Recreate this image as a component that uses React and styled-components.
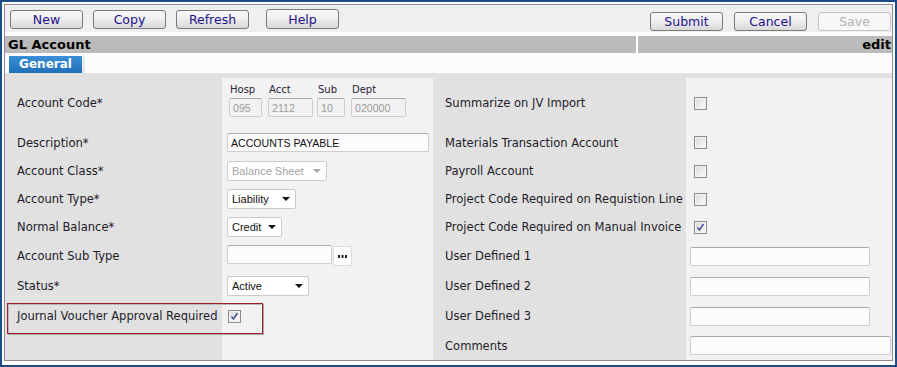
import React from "react";
import styled, { createGlobalStyle } from "styled-components";

const GlobalStyle = createGlobalStyle`
  html, body {
    margin: 0;
    padding: 0;
    background: #ffffff;
  }
  body {
    font-family: "DejaVu Sans", Verdana, sans-serif;
  }
`;

const Frame = styled.div`
  width: 897px;
  height: 367px;
  box-sizing: border-box;
  border: 2px solid #1a4c88;
  padding: 2px 2px 4px 2px;
  background: #fdfdfd;
`;

const Panel = styled.div`
  height: 100%;
  box-sizing: border-box;
  border: 1px solid #8c8c8c;
  display: flex;
  flex-direction: column;
  background: #ffffff;
`;

const Toolbar = styled.div`
  height: 27px;
  flex: none;
  display: flex;
  justify-content: space-between;
  background: #efefef;
  padding: 0 1px 0 5px;
  margin-bottom: 4px;
`;

const ButtonGroup = styled.div`
  display: flex;
  align-items: flex-start;
  gap: ${p => p.$gap}px;
  padding-top: ${p => p.$top}px;
`;

const Button = styled.button`
  width: 73px;
  height: ${p => (p.$raise ? 20 : 19)}px;
  margin-top: ${p => (p.$raise ? -1 : 0)}px;
  margin-left: ${p => p.$push || 0}px;
  box-sizing: border-box;
  padding: 0;
  border: 1px solid ${p => (p.disabled ? "#c6c6c6" : "#7a7a7a")};
  border-radius: 3px;
  background: ${p =>
    p.disabled
      ? "#f7f7f7"
      : "linear-gradient(#f8f8f8 0%, #efefef 45%, #d8d8d8 100%)"};
  color: ${p => (p.disabled ? "#b2b2b2" : "#1f118c")};
  font: 12.5px "DejaVu Sans", Verdana, sans-serif;
  line-height: 17px;
`;

const HeaderBar = styled.div`
  height: 17px;
  flex: none;
  display: grid;
  grid-template-columns: 631px 1fr;
  gap: 2px;
`;

const HeaderCell = styled.div`
  background: #bbbbbb;
  font: bold 13px "DejaVu Sans", Verdana, sans-serif;
  line-height: 17px;
  color: #000;
  text-align: ${p => p.$align || "left"};
  padding: 0 1px 0 3px;
`;

const TabRow = styled.div`
  height: 20px;
  flex: none;
  background: #fcfcfc;
  padding: 3px 0 0 4px;
  box-sizing: border-box;
  display: flex;
`;

const Tab = styled.div`
  width: 73px;
  height: 17px;
  background: linear-gradient(#3b8fd6, #1f6fba);
  color: #ffffff;
  font: bold 12px "DejaVu Sans", Verdana, sans-serif;
  line-height: 17px;
  text-align: center;
  border-right: 3px solid #ececec;
`;

const FormGrid = styled.div`
  flex: 1;
  display: grid;
  grid-template-columns: 217px 211px 253px 1fr;
  grid-template-rows: 50px 29px 28px 28px 28px 30px 30px 30px 1fr;
  background: #e1e1e1;
  padding-top: 5px;
`;

const Label = styled.div`
  position: relative;
  display: flex;
  align-items: center;
  padding-left: 12px;
  font-size: 11.55px;
  color: #1f1c2a;
  white-space: nowrap;
`;

const Value = styled.div`
  display: flex;
  align-items: ${p => p.$align || "center"};
  background: #f2f2f2;
  padding-left: ${p => p.$pad ?? 5}px;
`;

const Highlight = styled.div`
  position: absolute;
  left: 2px;
  top: 2px;
  width: 256px;
  height: 31px;
  box-sizing: border-box;
  border: 1px solid #9e1b2b;
  box-shadow: 1px 1px 0 #a8a8a8, inset 1px 1px 0 #b8b8b8;
  pointer-events: none;
`;

const CodeGroup = styled.div`
  display: flex;
  padding-top: 6px;
  margin-left: 2px;
`;

const CodePart = styled.div`
  display: flex;
  flex-direction: column;
  margin-left: ${p => p.$gap || 0}px;
`;

const SubLabel = styled.span`
  font-size: 10px;
  line-height: 12px;
  color: #2b2438;
  padding-left: 1px;
  margin-bottom: 2px;
`;

const Field = styled.input`
  width: ${p => p.$w}px;
  height: ${p => p.$h || 19}px;
  box-sizing: border-box;
  margin: 0;
  padding: 0 3px;
  border: 1px solid #cfcfcf;
  border-top-color: #a9a9a9;
  border-radius: 2px;
  background: ${p => (p.disabled ? "#f2f2f2" : "#fcfcfc")};
  color: ${p => (p.disabled ? "#9c9c9c" : "#111")};
  font: 10.6px "Liberation Sans", Arial, sans-serif;
  outline: none;
`;

const SelectBox = styled.div`
  width: ${p => p.$w}px;
  height: 20px;
  box-sizing: border-box;
  display: flex;
  align-items: center;
  justify-content: space-between;
  padding: 0 5px 0 4px;
  border: 1px solid #cccccc;
  border-radius: 2px;
  background: #ffffff;
  color: ${p => (p.$disabled ? "#a3a3a3" : "#111")};
  font: 11px "Liberation Sans", Arial, sans-serif;
`;

const Arrow = styled.span`
  width: 0;
  height: 0;
  border-left: 4px solid transparent;
  border-right: 4px solid transparent;
  border-top: 4px solid ${p => (p.$disabled ? "#a8a8a8" : "#111")};
`;

const LookupRow = styled.div`
  display: flex;
  padding-top: 4px;
`;

const LookupButton = styled.div`
  width: 19px;
  height: 20px;
  margin-left: 1px;
  margin-top: 1px;
  box-sizing: border-box;
  border: 1px solid #dcdcdc;
  background: #ffffff;
  display: flex;
  align-items: center;
  justify-content: center;
`;

const Box = styled.span`
  width: 13px;
  height: 13px;
  box-sizing: border-box;
  border: 1px solid #8a8b8b;
  box-shadow: inset 0 0 0 1px #f3f3f3;
  background: linear-gradient(135deg, #d9d9d9, #fbfbfb);
  display: flex;
  align-items: center;
  justify-content: center;
`;

const Checkbox = ({ checked }) => (
  <Box>
    {checked && (
      <svg width="9" height="9" viewBox="0 0 9 9">
        <path d="M1.5 4.5 L3.5 7 L7.5 1" fill="none" stroke="#4a5a9c" strokeWidth="1.6" />
      </svg>
    )}
  </Box>
);

const Select = ({ w, children, disabled }) => (
  <SelectBox $w={w} $disabled={disabled}>
    <span>{children}</span>
    <Arrow $disabled={disabled} />
  </SelectBox>
);

export default function App() {
  return (
    <>
      <GlobalStyle />
      <Frame>
        <Panel>
          <Toolbar>
            <ButtonGroup $gap={10} $top={5}>
              <Button>New</Button>
              <Button>Copy</Button>
              <Button>Refresh</Button>
              <Button $raise $push={7}>Help</Button>
            </ButtonGroup>
            <ButtonGroup $gap={11} $top={7}>
              <Button>Submit</Button>
              <Button>Cancel</Button>
              <Button disabled>Save</Button>
            </ButtonGroup>
          </Toolbar>

          <HeaderBar>
            <HeaderCell>GL Account</HeaderCell>
            <HeaderCell $align="right">edit</HeaderCell>
          </HeaderBar>

          <TabRow>
            <Tab>General</Tab>
          </TabRow>

          <FormGrid>
            <Label>Account Code*</Label>
            <Value $align="flex-start">
              <CodeGroup>
                <CodePart>
                  <SubLabel>Hosp</SubLabel>
                  <Field $w={33} disabled value="095" readOnly />
                </CodePart>
                <CodePart $gap={6}>
                  <SubLabel>Acct</SubLabel>
                  <Field $w={45} disabled value="2112" readOnly />
                </CodePart>
                <CodePart $gap={4}>
                  <SubLabel>Sub</SubLabel>
                  <Field $w={28} disabled value="10" readOnly />
                </CodePart>
                <CodePart $gap={6}>
                  <SubLabel>Dept</SubLabel>
                  <Field $w={55} disabled value="020000" readOnly />
                </CodePart>
              </CodeGroup>
            </Value>
            <Label>Summarize on JV Import</Label>
            <Value $pad={8}><Checkbox /></Value>

            <Label>Description*</Label>
            <Value><Field $w={202} value="ACCOUNTS PAYABLE" readOnly /></Value>
            <Label>Materials Transaction Account</Label>
            <Value $pad={8}><Checkbox /></Value>

            <Label>Account Class*</Label>
            <Value><Select w={100} disabled>Balance Sheet</Select></Value>
            <Label>Payroll Account</Label>
            <Value $pad={8}><Checkbox /></Value>

            <Label>Account Type*</Label>
            <Value><Select w={69}>Liability</Select></Value>
            <Label>Project Code Required on Requistion Line</Label>
            <Value $pad={8}><Checkbox /></Value>

            <Label>Normal Balance*</Label>
            <Value><Select w={55}>Credit</Select></Value>
            <Label>Project Code Required on Manual Invoice</Label>
            <Value $pad={8}><Checkbox checked /></Value>

            <Label>Account Sub Type</Label>
            <Value $align="flex-start">
              <LookupRow>
                <Field $w={105} value="" readOnly />
                <LookupButton>
                  <svg width="9" height="3" viewBox="0 0 9 3">
                    <rect x="0" y="0" width="2" height="3" fill="#222" />
                    <rect x="3.5" y="0" width="2" height="3" fill="#222" />
                    <rect x="7" y="0" width="2" height="3" fill="#222" />
                  </svg>
                </LookupButton>
              </LookupRow>
            </Value>
            <Label>User Defined 1</Label>
            <Value $pad={4}><Field $w={180} value="" readOnly /></Value>

            <Label>Status*</Label>
            <Value><Select w={82}>Active</Select></Value>
            <Label>User Defined 2</Label>
            <Value $pad={4}><Field $w={180} value="" readOnly /></Value>

            <Label>
              Journal Voucher Approval Required
              <Highlight />
            </Label>
            <Value $pad={6}><Checkbox checked /></Value>
            <Label>User Defined 3</Label>
            <Value $pad={4}><Field $w={180} value="" readOnly /></Value>

            <Label />
            <Value />
            <Label>Comments</Label>
            <Value $pad={4}><Field $w={201} value="" readOnly /></Value>
          </FormGrid>
        </Panel>
      </Frame>
    </>
  );
}
